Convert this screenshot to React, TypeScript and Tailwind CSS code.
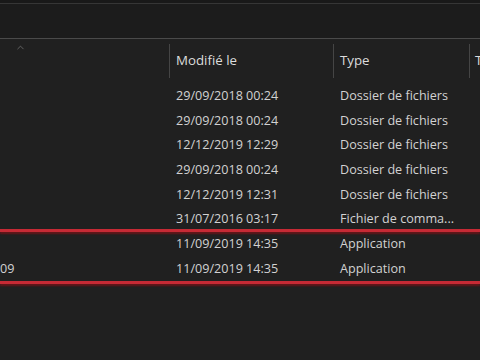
import { ChevronUp } from "lucide-react"

const rows = [
  { name: "", date: "29/09/2018 00:24", type: "Dossier de fichiers" },
  { name: "", date: "29/09/2018 00:24", type: "Dossier de fichiers" },
  { name: "", date: "12/12/2019 12:29", type: "Dossier de fichiers" },
  { name: "", date: "29/09/2018 00:24", type: "Dossier de fichiers" },
  { name: "", date: "12/12/2019 12:31", type: "Dossier de fichiers" },
  { name: "", date: "31/07/2016 03:17", type: "Fichier de comma..." },
]

const apps = [
  { name: "", date: "11/09/2019 14:35", type: "Application" },
  { name: "09", date: "11/09/2019 14:35", type: "Application" },
]

function Row({ name, date, type }: { name: string; date: string; type: string }) {
  return (
    <div className="flex h-[24.7px] items-center text-[12.6px] text-[#d2d2d2]">
      <div className="w-[169px] shrink-0 overflow-hidden whitespace-nowrap">{name}</div>
      <div className="w-[164px] shrink-0 pl-[7px] whitespace-nowrap">{date}</div>
      <div className="w-[136px] shrink-0 pl-[7px] whitespace-nowrap">{type}</div>
    </div>
  )
}

export default function App() {
  return (
    <div className="w-[480px] h-[360px] overflow-hidden bg-[#202020]" style={{ fontFamily: '"Open Sans", "Noto Sans", sans-serif' }}>
      {/* address / search strip */}
      <div className="h-[3px] bg-[#191919]" />
      <div className="h-px bg-[#363636]" />
      <div className="h-[34px] bg-[#1c1c1c]" />
      <div className="h-px bg-[#4a4a4a]" />

      {/* column headers */}
      <div className="flex h-[45px] items-start pt-[5px] text-[13.3px] text-[#dcdcdc]">
        <div className="w-[169px] h-[34px] shrink-0 flex justify-start">
          <ChevronUp className="ml-[15px] -mt-[2px] text-[#8c8c8c]" size={11} strokeWidth={1.3} />
        </div>
        <div className="w-[164px] h-[34px] shrink-0 flex items-center border-l border-[#454545] pl-[6px]">Modifié le</div>
        <div className="w-[136px] h-[34px] shrink-0 flex items-center border-l border-[#454545] pl-[6px]">Type</div>
        <div className="h-[34px] flex-1 flex items-center overflow-hidden border-l border-[#454545] pl-[5px] whitespace-nowrap">T</div>
      </div>

      {rows.map((r, i) => (
        <Row key={i} {...r} />
      ))}

      <div className="relative">
        {apps.map((r, i) => (
          <Row key={i} {...r} />
        ))}
        <div className="pointer-events-none absolute inset-x-0 -top-[3px] h-[3px] bg-[#c62a35] shadow-[0_2px_2px_rgba(110,20,24,0.9)]" />
        <div className="pointer-events-none absolute inset-x-0 -bottom-[2px] h-[3px] bg-[#c62a35] shadow-[0_2px_2px_rgba(110,20,24,0.9)]" />
      </div>
    </div>
  )
}
